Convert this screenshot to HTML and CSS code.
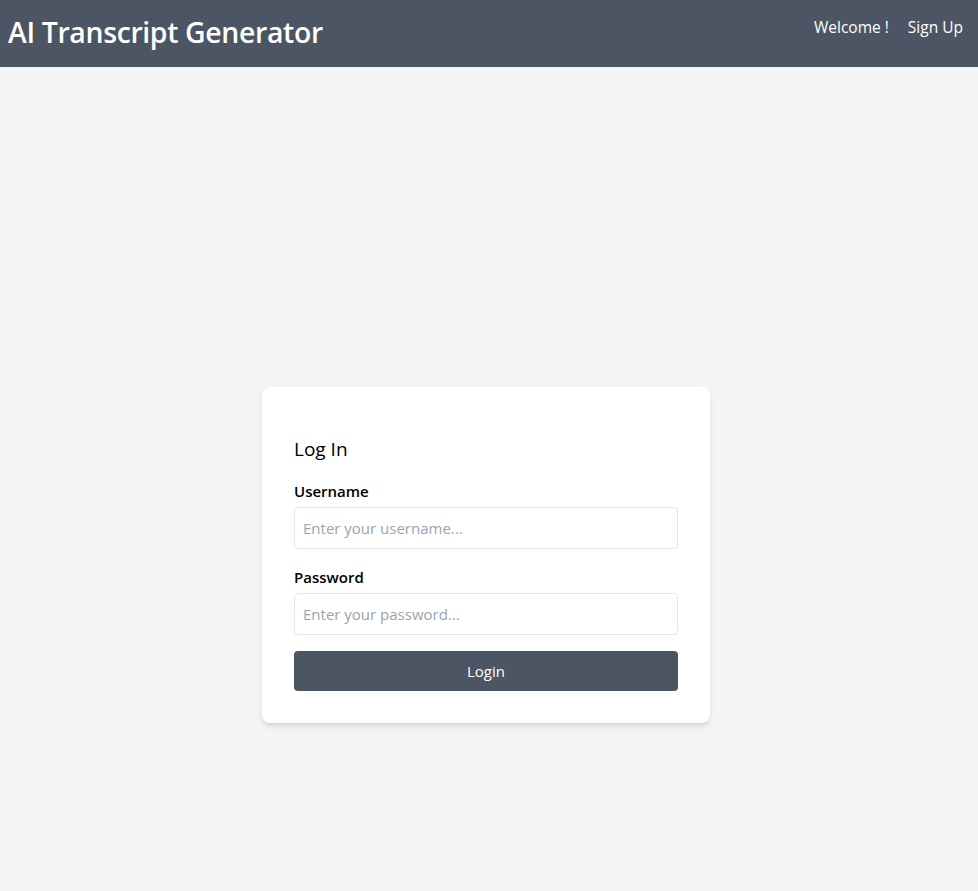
FILE: index.html
```html
<!DOCTYPE html>
<html lang="en">
<head>
<meta charset="utf-8">
<title>AI Transcript Generator</title>
<link rel="stylesheet" href="styles.css">
</head>
<body>
<header class="topbar">
  <h1 class="brand">AI Transcript Generator</h1>
  <nav class="nav">
    <span class="nav-item">Welcome !</span>
    <a class="nav-item" href="#">Sign Up</a>
  </nav>
</header>
<main class="main">
  <div class="card">
    <h2 class="card-title">Log In</h2>
    <form class="form">
      <label class="label" for="u">Username</label>
      <input class="input" id="u" type="text" placeholder="Enter your username...">
      <label class="label" for="p">Password</label>
      <input class="input" id="p" type="password" placeholder="Enter your password...">
      <button class="btn" type="button">Login</button>
    </form>
  </div>
</main>
</body>
</html>
```

FILE: styles.css
```css
* { box-sizing: border-box; }
html, body { margin: 0; padding: 0; }
body {
  background: #f3f4f6;
  font-family: "Open Sans", "Noto Sans", sans-serif;
  color: #000;
  min-height: 891px;
}
.topbar {
  background: #4b5563;
  height: 67px;
  display: flex;
  align-items: flex-start;
  justify-content: space-between;
  padding: 0 15px 0 8px;
}
.brand {
  margin: 0;
  padding-top: 14px;
  font-size: 28.4px;
  line-height: 36px;
  font-weight: 600;
  color: #fff;
  letter-spacing: -0.35px;
}
.nav {
  display: flex;
  gap: 19px;
  padding-top: 15px;
}
.nav-item {
  color: #fff;
  font-size: 15.5px;
  line-height: 24px;
  text-decoration: none;
}
.main {
  padding: 320px 6px 0 0;
  display: flex;
  justify-content: center;
}
.card {
  width: 448px;
  background: #fff;
  border-radius: 8px;
  box-shadow: 0 4px 6px -1px rgba(0,0,0,0.1), 0 2px 4px -2px rgba(0,0,0,0.1);
  padding: 48px 32px 32px;
}
.card-title {
  margin: 0 0 17px;
  font-size: 19px;
  line-height: 29px;
  font-weight: 500;
}
.form { display: flex; flex-direction: column; }
.label {
  font-size: 15px;
  line-height: 20px;
  font-weight: 600;
  margin-bottom: 6px;
}
.input {
  height: 42px;
  border: 1px solid #e5e7eb;
  border-radius: 4px;
  padding: 0 8px;
  font-family: inherit;
  font-size: 15px;
  margin-bottom: 18px;
  outline: none;
}
.input::placeholder { color: #9ca3af; }
.input + .btn { margin-top: -2px; }
.btn {
  height: 40px;
  border: none;
  border-radius: 4px;
  background: #4b5563;
  color: #fff;
  font-family: inherit;
  font-size: 15px;
  font-weight: 500;
}
```
